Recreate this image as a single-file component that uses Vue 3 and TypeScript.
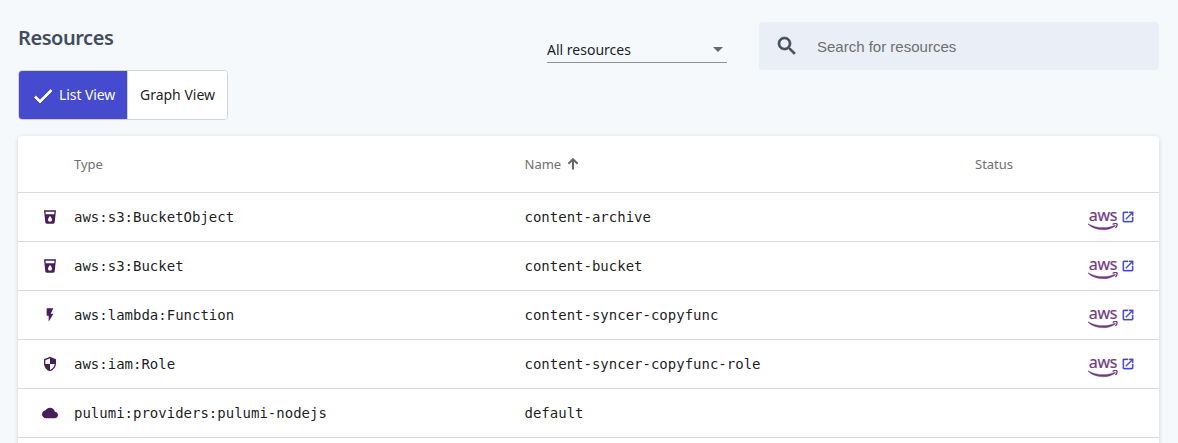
<script setup lang="ts">
interface Resource {
  icon: keyof typeof icons
  type: string
  name: string
  aws: boolean
}

const icons = {
  bucket: 'M3 2l2.01 18.23C5.13 21.23 5.97 22 7 22h10c1.03 0 1.87-.77 1.99-1.77L21 2H3zm9 17c-1.66 0-3-1.34-3-3 0-2 3-5.4 3-5.4s3 3.4 3 5.4c0 1.66-1.34 3-3 3zm6.33-11H5.67l-.44-4h13.55l-.45 4z',
  bolt: 'M7 2v11h3v9l7-12h-4l4-8z',
  shield: 'M12 1L3 5v6c0 5.55 3.84 10.74 9 12 5.16-1.26 9-6.45 9-12V5l-9-4zm0 10.99h7c-.53 4.12-3.28 7.79-7 8.94V12H5V6.3l7-3.11v8.8z',
  cloud: 'M19.35 10.04C18.67 6.59 15.64 4 12 4 9.11 4 6.6 5.64 5.35 8.04 2.34 8.36 0 10.91 0 14c0 3.31 2.69 6 6 6h13c2.76 0 5-2.24 5-5 0-2.64-2.05-4.78-4.65-4.96z',
}

const resources: Resource[] = [
  { icon: 'bucket', type: 'aws:s3:BucketObject', name: 'content-archive', aws: true },
  { icon: 'bucket', type: 'aws:s3:Bucket', name: 'content-bucket', aws: true },
  { icon: 'bolt', type: 'aws:lambda:Function', name: 'content-syncer-copyfunc', aws: true },
  { icon: 'shield', type: 'aws:iam:Role', name: 'content-syncer-copyfunc-role', aws: true },
  { icon: 'cloud', type: 'pulumi:providers:pulumi-nodejs', name: 'default', aws: false },
]
</script>

<template>
  <main class="page">
    <header class="top">
      <div class="left">
        <h1>Resources</h1>
        <div class="toggle">
          <button class="seg active">
            <svg class="check" viewBox="0 0 24 24"><path d="M9 16.17L4.83 12l-1.42 1.41L9 19 21 7l-1.41-1.41z" /></svg>
            <span class="seg-text">List View</span>
          </button>
          <button class="seg"><span class="seg-text">Graph View</span></button>
        </div>
      </div>
      <div class="filters">
        <div class="select"><span>All resources</span><i class="caret"></i></div>
        <div class="search">
          <svg viewBox="0 0 24 24"><path d="M15.5 14h-.79l-.28-.27C15.41 12.59 16 11.11 16 9.5 16 5.91 13.09 3 9.5 3S3 5.91 3 9.5 5.91 16 9.5 16c1.61 0 3.09-.59 4.23-1.57l.27.28v.79l5 4.99L20.49 19l-4.99-5zm-6 0C7.01 14 5 11.99 5 9.5S7.01 5 9.5 5 14 7.01 14 9.5 11.99 14 9.5 14z" /></svg>
          <span>Search for resources</span>
        </div>
      </div>
    </header>

    <section class="card">
      <div class="row head">
        <span></span>
        <span>Type</span>
        <span class="sorted">Name<svg viewBox="0 0 12 12"><path d="M6 11.5V1.5M1.4 5.8L6 1.2l4.6 4.6" /></svg></span>
        <span>Status</span>
      </div>
      <div v-for="r in resources" :key="r.type" class="row">
        <svg class="kind" viewBox="0 0 24 24"><path :d="icons[r.icon]" /></svg>
        <span>{{ r.type }}</span>
        <span>{{ r.name }}</span>
        <span class="links">
          <template v-if="r.aws">
            <span class="aws">
              <span class="aws-word">aws</span>
              <svg viewBox="0 0 30 8">
                <path class="smile" d="M.3 .7C8 5.300 19 5.900 26.600 2.200c.8-.3 1.300.5.600 1C20 8.400 7.500 8.200.2 1.400z" />
                <path class="tip" d="M24.600 1.300c1.900-.8 4-.8 4.400-.3.300.7-.3 2.500-1.500 4" />
              </svg>
            </span>
            <svg class="open" viewBox="0 0 24 24"><path d="M19 19H5V5h7V3H5c-1.110 0-2 .9-2 2v14c0 1.100.89 2 2 2h14c1.100 0 2-.9 2-2v-7h-2v7zM14 3v2h3.590l-9.830 9.830 1.410 1.410L19 6.410V10h2V3h-7z" /></svg>
          </template>
        </span>
      </div>
      <div class="row"></div>
    </section>
  </main>
</template>

<style>
body {
  margin: 0;
  background: #f5f9fc;
}
</style>

<style scoped>
.page {
  box-sizing: border-box;
  height: 443px;
  padding: 22px 19px 0 18px;
  overflow: hidden;
  background: #f5f9fc;
  font: 14px/20px "Noto Sans", "Open Sans", sans-serif;
  color: rgba(0, 0, 0, 0.9);
}
.top {
  display: flex;
  justify-content: space-between;
  height: 114px;
}
h1 {
  margin: 0 0 16px;
  font-size: 20px;
  line-height: 32px;
  font-weight: 600;
  letter-spacing: -0.45px;
  color: #434c5f;
}
.toggle {
  display: flex;
  box-sizing: border-box;
  width: 210px;
  height: 50px;
  border: 1px solid #d0d4d9;
  border-radius: 4px;
  overflow: hidden;
  background: #fff;
}
.seg {
  flex: 1;
  display: flex;
  align-items: center;
  justify-content: center;
  padding: 0;
  border: 0;
  border-left: 1px solid #d0d4e8;
  background: #fff;
  color: rgba(0, 0, 0, 0.9);
  font: inherit;
  white-space: nowrap;
}
.seg.active {
  flex: 0 0 108px;
  justify-content: flex-start;
  padding-left: 12px;
  box-sizing: border-box;
  border-left: 0;
  background: #454acf;
  color: #fff;
}
.check {
  width: 24px;
  height: 24px;
  margin: 2px 4px 0 0;
  fill: #fff;
  stroke: #fff;
  stroke-width: 0.9;
}
.seg.active .seg-text {
  letter-spacing: -0.08px;
}
.filters {
  display: flex;
  gap: 32px;
}
.select {
  display: flex;
  align-items: center;
  justify-content: space-between;
  box-sizing: border-box;
  width: 180px;
  height: 25px;
  margin-top: 16px;
  padding-right: 4px;
  border-bottom: 1px solid #909396;
}
.caret {
  border: 5px solid transparent;
  border-top-color: #67696b;
  border-bottom: 0;
  margin-top: -1px;
}
.search {
  display: flex;
  align-items: center;
  box-sizing: border-box;
  width: 400px;
  height: 48px;
  padding-left: 16px;
  border-radius: 4px;
  background: #eaeef6;
  color: #6f6f6f;
  font: 15px/20px "Liberation Sans", Arial, sans-serif;
}
.search svg {
  width: 24px;
  height: 24px;
  margin-right: 18px;
  fill: #434c5f;
  stroke: #434c5f;
  stroke-width: 0.6;
}
.search span {
  padding-top: 2px;
}
.card {
  border-radius: 4px;
  background: #fff;
  box-shadow: 0 2px 2px -1px rgba(0, 0, 0, 0.14), 0 1px 4px rgba(0, 0, 0, 0.16);
}
.row {
  display: grid;
  grid-template-columns: 56px 450.5px 450.5px 1fr;
  align-items: center;
  height: 48px;
  border-bottom: 1px solid #dadada;
  font: 14px/20px "DejaVu Sans Mono", monospace;
}
.head {
  height: 56px;
  color: #707070;
  font: 13px/20px "Noto Sans", "Open Sans", sans-serif;
}
.sorted {
  display: flex;
  align-items: center;
}
.sorted svg {
  width: 12px;
  height: 12px;
  margin: -1px 0 0 6px;
  fill: none;
  stroke: #666;
  stroke-width: 2;
}
.kind {
  width: 16px;
  height: 16px;
  margin-left: 24px;
  fill: #471d5c;
}
.links {
  display: flex;
  align-items: center;
  justify-content: flex-end;
  padding-right: 24px;
}
.aws {
  display: flex;
  flex-direction: column;
  align-items: center;
  width: 30px;
  margin: 5px 3px 0 0;
}
.aws-word {
  height: 15px;
  font: 16px/15px "Noto Sans", "Open Sans", sans-serif;
  letter-spacing: -0.3px;
  color: #713a83;
  -webkit-text-stroke: 0.2px #713a83;
}
.aws svg {
  width: 30px;
  height: 8px;
}
.smile {
  fill: #713a83;
  stroke: #713a83;
  stroke-width: 0.3;
}
.tip {
  fill: none;
  stroke: #713a83;
  stroke-width: 1.3;
}
.open {
  width: 14px;
  height: 14px;
  fill: #454acf;
  stroke: #454acf;
  stroke-width: 0.6;
}
</style>
